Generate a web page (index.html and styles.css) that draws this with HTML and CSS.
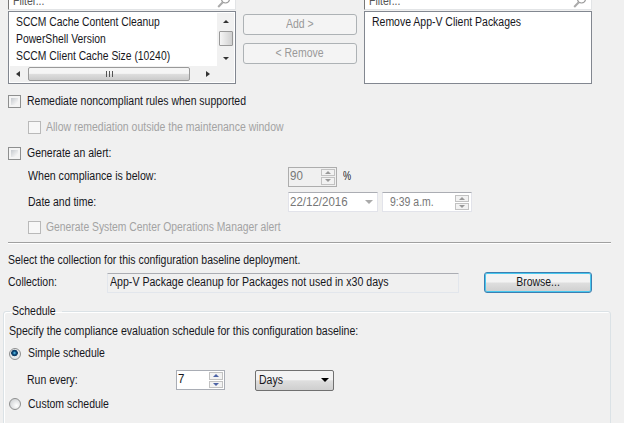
FILE: index.html
```html
<!DOCTYPE html>
<html lang="en">
<head>
<meta charset="utf-8">
<title>Deploy Configuration Baseline</title>
<link rel="stylesheet" href="styles.css">
</head>
<body>
<main class="dialog">
  <section class="picker">
    <div class="column">
      <div class="filter"><span class="t">Filter...</span><svg class="lens" width="14" height="14" viewBox="0 0 14 14"><circle cx="8.5" cy="5" r="4"/><path class="handle" d="M5.8 8.2L1.2 13"/></svg></div>
      <div class="list">
        <div class="list-main">
          <ul><li><span class="t tight">SCCM Cache Content Cleanup</span></li><li><span class="t tight">PowerShell Version</span></li><li><span class="t tight">SCCM Client Cache Size (10240)</span></li></ul>
          <div class="vbar"><i class="up"></i><b></b><i class="down"></i></div>
        </div>
        <div class="hbar"><i class="left"></i><b><s></s><s></s><s></s></b><i class="right"></i></div>
      </div>
    </div>
    <div class="moves"><button class="off"><span class="t">Add &gt;</span></button><button class="off"><span class="t">&lt; Remove</span></button></div>
    <div class="column">
      <div class="filter"><span class="t">Filter...</span><svg class="lens" width="14" height="14" viewBox="0 0 14 14"><circle cx="8.5" cy="5" r="4"/><path class="handle" d="M5.8 8.2L1.2 13"/></svg></div>
      <div class="list"><ul><li><span class="t">Remove App-V Client Packages</span></li></ul></div>
    </div>
  </section>

  <div class="row remediate"><i class="check"></i><span class="t">Remediate noncompliant rules when supported</span></div>
  <div class="row sub allow"><i class="check off"></i><span class="t dim">Allow remediation outside the maintenance window</span></div>
  <div class="row alert"><i class="check"></i><span class="t">Generate an alert:</span></div>
  <div class="row field compliance"><label><span class="t loose">When compliance is below:</span></label>
    <div class="spin off"><span class="t digits">90</span><div class="arrows"><i></i><i></i></div></div><span class="t percent">%</span></div>
  <div class="row field date"><label><span class="t">Date and time:</span></label>
    <div class="picker-box day"><span class="t digits">22/12/2016</span><i class="drop"></i></div>
    <div class="picker-box time"><span class="t">9:39 a.m.</span><div class="arrows"><i></i><i></i></div></div></div>
  <div class="row sub scom"><i class="check off"></i><span class="t tight dim">Generate System Center Operations Manager alert</span></div>
  <hr>
  <div class="row select"><span class="t">Select the collection for this configuration baseline deployment.</span></div>
  <div class="row collection"><label><span class="t">Collection:</span></label><div class="readonly"><span class="t loose">App-V Package cleanup for Packages not used in x30 days</span></div><button class="default"><span class="t">Browse...</span></button></div>

  <fieldset>
    <legend><span class="t">Schedule</span></legend>
    <div class="row specify"><span class="t loose">Specify the compliance evaluation schedule for this configuration baseline:</span></div>
    <div class="row simple"><i class="radio on"></i><span class="t">Simple schedule</span></div>
    <div class="row every"><label><span class="t">Run every:</span></label><div class="spin"><span class="t digits">7</span><div class="arrows"><i></i><i></i></div></div><div class="combo"><span class="t">Days</span><i></i></div></div>
    <div class="row custom"><i class="radio"></i><span class="t">Custom schedule</span></div>
  </fieldset>
</main>
</body>
</html>
```
FILE: styles.css
```css
* { box-sizing: border-box; }
body { margin: 0; background: #f0f0f0; color: #17171c; font: 12px/17px "Liberation Sans", Arial, sans-serif; overflow: hidden; }
.dialog { width: 624px; height: 423px; overflow: hidden; }
.t { display: inline-block; white-space: nowrap; transform: scaleX(.873); transform-origin: 0 50%; }
.t.tight { transform: scaleX(.862); }
.t.loose { transform: scaleX(.883); }
.t.digits { transform: scaleX(.96); }
.dim { color: #a3a3a3; }
ul { margin: 0; padding: 1px 0 0 6px; list-style: none; flex: 1; }
li { height: 17px; }

.picker { display: flex; gap: 7px; padding-left: 8px; height: 89px; }
.column { width: 228px; }
.filter { display: flex; justify-content: space-between; height: 10px; background: #fff; border: solid #e2e4e6; border-width: 0 1px 1px 0; border-left: 1px solid #777; color: #555; overflow: hidden; padding-left: 4px; }
.filter .t { margin-top: -7px; }
.lens { margin: -6px 4px 0 0; fill: none; stroke: #999; stroke-width: 1.2; }
.lens .handle { stroke-width: 2; stroke: #aaa; }
.list { height: 73px; margin-top: 1px; background: #fff; border: 1px solid #828790; padding: 1px; }
.list-main { display: flex; height: 53px; }
.vbar { display: flex; flex-direction: column; align-items: center; justify-content: space-between; width: 17px; background: #f1f1f1; padding: 7px 0 6px; }
.vbar b { width: 14px; height: 15px; margin-top: -3px; border: 1px solid #999; border-radius: 1px; background: linear-gradient(90deg, #f5f5f5, #d0d0d0); }
.up, .down { border: 3px solid transparent; }
.up { border-top: 0; border-bottom: 3px solid #333; }
.down { border-bottom: 0; border-top: 3px solid #333; }
.hbar { display: flex; align-items: center; height: 16px; background: #f1f1f1; padding: 0 24px 0 6px; }
.left, .right { border: 3px solid transparent; }
.left { border-left: 0; border-right: 4px solid #333; }
.right { border-right: 0; border-left: 4px solid #333; }
.hbar b { display: flex; align-items: center; justify-content: center; gap: 2px; width: 163px; height: 14px; margin: 0 16px 0 8px; border: 1px solid #999; border-radius: 2px; background: linear-gradient(#f5f5f5 45%, #dedede 50%, #cbcbcb); }
.hbar s { width: 1px; height: 6px; background: #555; }

.moves { display: flex; flex-direction: column; gap: 8px; width: 114px; padding-top: 14px; }
button { height: 21px; padding: 0; border: 1px solid #707070; border-radius: 3px; font: inherit; color: inherit; background: linear-gradient(#f3f3f3 48%, #dedede 52%, #cfcfcf); }
button .t { transform-origin: 50% 50%; }
button.off { border-color: #adb2b5; background: #f4f4f4; color: #999; }
button.default { width: 108px; margin-left: 25px; border-color: #3c7fb1; box-shadow: inset 0 0 0 1px #48c8ef; }

.row { display: flex; align-items: center; padding-left: 8px; }
.check { width: 13px; height: 13px; margin-right: 6px; border: 1px solid #8e8f8f; background: linear-gradient(135deg, #c5c9ce, #f4f4f4 80%) 2px 2px / 7px 7px no-repeat, #f4f4f4; }
.check.off { margin-right: 5px; border-color: #b9b9b9; background: #f7f7f7; }
.sub { padding-left: 28px; }
.remediate { height: 25px; }
.allow { height: 27px; }
.alert { height: 25px; }
.compliance { height: 21px; }
.date { height: 30px; }
.scom { height: 21px; }
.field { padding-left: 28px; }
.field label { width: 260px; }
.spin { display: flex; justify-content: space-between; width: 49px; height: 20px; padding: 0 1px; border: 1px solid #a9adb5; background: #fff; }
.spin.off { border-color: #adadad; background: #f0f0f0; color: #777; }
.percent { margin-left: 6px; transform: scaleX(.76); }
.arrows { display: flex; flex-direction: column; gap: 1px; width: 14px; padding: 1px 0; }
.arrows i { display: flex; flex: 1; align-items: center; justify-content: center; border: 1px solid #c2c2c2; background: #f2f2f2; }
.arrows i::before { content: ""; border: 3px solid transparent; border-top: 0; border-bottom-color: #999; }
.arrows i + i::before { border-top: 3px solid #999; border-bottom: 0; }
.every .arrows i::before { border-bottom-color: #4c63a5; }
.every .arrows i + i::before { border-top-color: #4c63a5; }
.picker-box { display: flex; align-items: center; justify-content: space-between; width: 90px; height: 20px; margin-right: 4px; padding: 0 4px 0 1px; border: 1px solid #e2e3ea; border-top-color: #abadb3; background: #fff; color: #777; }
.picker-box .arrows { height: 17px; }
.time { padding: 0 2px 0 7px; }
.drop { border: 4px solid transparent; border-top-color: #aaa; border-bottom: 0; }

hr { width: 603px; height: 2px; margin: 4px 0 0 8px; border: 0; border-top: 1px solid #a0a0a0; border-bottom: 1px solid #fff; }
.select { height: 20px; margin-top: 6px; }
.collection { height: 25px; }
.collection label { width: 99px; }
.readonly { display: flex; align-items: center; width: 352px; height: 20px; padding-left: 2px; border: 1px solid #e2e6ec; border-top-color: #abadb3; border-radius: 1px; }

fieldset { width: 608px; height: 130px; margin: 8px 0 0 3px; padding: 0; border: 1px solid #dbe2e6; border-radius: 3px; box-shadow: inset 1px 1px #fff; }
legend { width: 52px; height: 17px; margin-left: 6px; padding: 0 2px; }
.specify { height: 22px; padding-left: 5px; }
.simple, .custom { height: 23px; padding-left: 5px; }
.radio { width: 12px; height: 12px; margin-right: 7px; border: 1px solid #8e8f8f; border-radius: 50%; background: radial-gradient(circle at 65% 65%, #fff, #c5c8cb); }
.radio.on { background: radial-gradient(circle at 45% 40%, #62cdf2 0, #0b4a7c 1.8px, #123b60 3px, #e6e9eb 3.6px); }
.every { height: 30px; padding-left: 23px; }
.every label { width: 149px; }
.combo { display: flex; align-items: center; justify-content: space-between; width: 79px; height: 21px; margin-left: 30px; padding: 0 4px 0 3px; border: 1px solid #707070; border-radius: 2px; background: linear-gradient(#f3f3f3 45%, #dedede 52%, #cfcfcf); }
.combo i { border: 4px solid transparent; border-top-color: #000; border-bottom: 0; }
.custom { height: 18px; }
```
